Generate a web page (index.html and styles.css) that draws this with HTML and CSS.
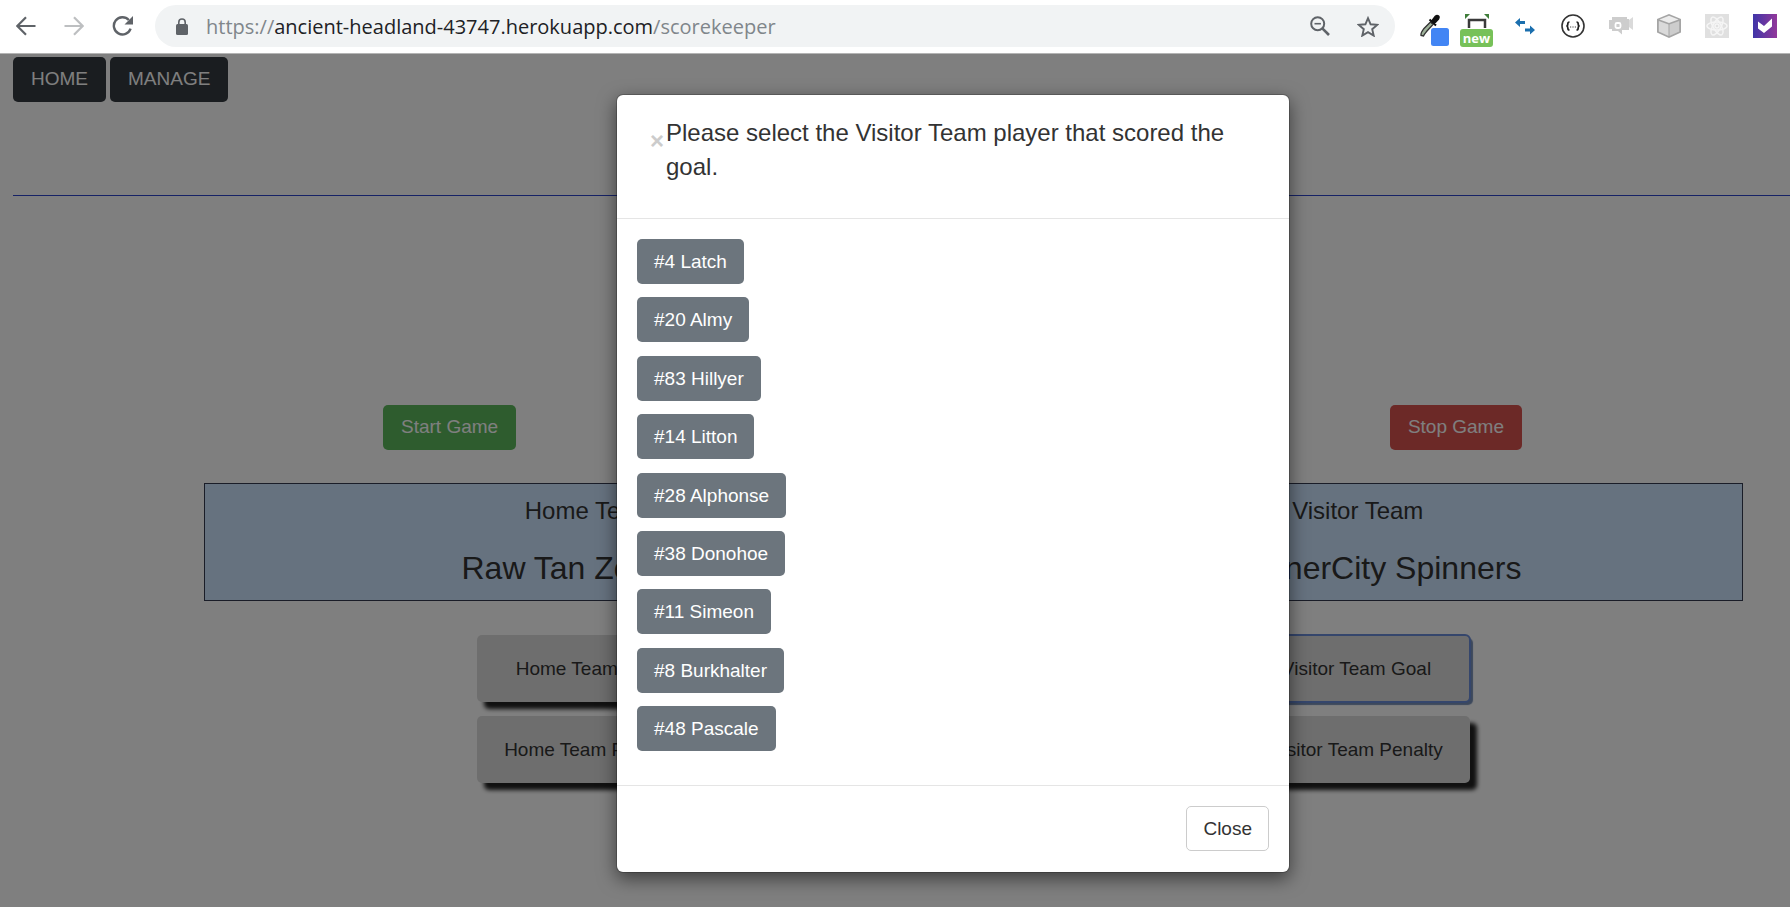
FILE: index.html
```html
<!DOCTYPE html>
<html lang="en">
<head>
<meta charset="utf-8">
<title>Scorekeeper</title>
<link rel="stylesheet" href="styles.css">
</head>
<body>
<header class="toolbar">
  <nav class="nav-buttons" aria-label="Browser navigation">
    <button class="icon-button" type="button" aria-label="Back">
      <svg width="20" height="20" viewBox="0 0 20 20" fill="none" stroke="#5f6368" stroke-width="2.2"><path d="M19.5 10H2M10 1.300L1.300 10L10 18.700"/></svg>
    </button>
    <button class="icon-button" type="button" aria-label="Forward">
      <svg width="20" height="20" viewBox="0 0 20 20" fill="none" stroke="#bdbfc1" stroke-width="2.2"><path d="M.5 10H18M10 1.300L18.700 10L10 18.700"/></svg>
    </button>
    <button class="icon-button" type="button" aria-label="Reload">
      <svg width="22" height="20" viewBox="0 0 22 20"><path d="M16.800 4A8.600 8.600 0 1 0 18.600 12.600" fill="none" stroke="#5f6368" stroke-width="2.400"/><path d="M21 0V8.500H12.500Z" fill="#5f6368"/></svg>
    </button>
  </nav>
  <div class="omnibox">
    <svg width="12" height="17" viewBox="0 0 12 17"><rect y="6" width="12" height="11" rx="1.500" fill="#5f6368"/><path d="M2.800 7V4.200a3.200 3.200 0 0 1 6.400 0V7" fill="none" stroke="#5f6368" stroke-width="1.600"/></svg>
    <p class="address">https://<span class="host">ancient-headland-43747.herokuapp.com</span>/scorekeeper</p>
    <button class="icon-button" type="button" aria-label="Zoom">
      <svg width="20" height="20" viewBox="0 0 20 20" fill="none" stroke="#5f6368"><circle cx="7.700" cy="7.700" r="6.500" stroke-width="2"/><path d="M12.300 12.300L19 19" stroke-width="2.600"/><path d="M4.500 7.700h6.400" stroke-width="1.600"/></svg>
    </button>
    <button class="icon-button" type="button" aria-label="Bookmark">
      <svg width="22" height="21" viewBox="0 0 22 21"><path d="M11 2.200L13.600 8.300L20.200 8.900L15.200 13.200L16.700 19.600L11 16.200L5.300 19.600L6.800 13.200L1.800 8.900L8.400 8.300Z" fill="none" stroke="#5f6368" stroke-width="1.900"/></svg>
    </button>
  </div>
  <div class="extensions">
    <svg class="eyedropper" width="30" height="34" viewBox="0 0 30 34"><path d="M2 22.500c-.5-3 1-4.500 3-7l6.500-6.500 2.500 2.500-6 6.500c-1.500 2-2.500 2.500-3.500 5z" fill="#9fb39b" stroke="#333" stroke-width="1.300"/><path d="M10.500 6.500l6.500 6M13 8l3.500-4.500c2-1.800 4.200 0 2.800 2.300L15.500 10z" fill="#111" stroke="#111" stroke-width="2"/><rect x="12" y="15" width="18" height="18" rx="2.500" fill="#4285f4"/></svg>
    <span class="new-extension">
      <svg width="26" height="15" viewBox="0 0 26 15"><path d="M1 0h5L1 5zM25 0h-5l5 5z" fill="#3f7d3a"/><path d="M5 14V6h16v8" fill="none" stroke="#3a3a3a" stroke-width="2.500"/></svg>
      <span class="new-badge">new</span>
    </span>
    <svg width="24" height="24" viewBox="0 0 24 24"><path d="M2 8.500l5-4.500v3h5v3H7v3z" fill="#1b6fae"/><path d="M22 16l-5-4.500v3h-5v3h5v3z" fill="#1b6fae"/></svg>
    <svg width="24" height="24" viewBox="0 0 24 24"><circle cx="12" cy="12" r="11" fill="#fff" stroke="#333" stroke-width="1.600"/><path d="M8.500 8q-1.700 0-1.700 2t-1.500 2q1.500 0 1.500 2t1.700 2M15.500 8q1.700 0 1.700 2t1.500 2q-1.500 0-1.500 2t-1.700 2" fill="none" stroke="#222" stroke-width="1.700"/><path d="M9 13h6" stroke="#444" stroke-width="1.200" stroke-dasharray="1.200 1.200"/></svg>
    <svg width="24" height="24" viewBox="0 0 24 24"><path d="M3 3h15v2h2v11h-7v4.500L9 17H3v-2H0V6h3z" fill="#cdcdcd"/><path d="M20 6l4-3v13l-4-3z" fill="#dadada"/><rect x="6.500" y="9" width="5" height="5" rx="1.500" fill="#cdcdcd" stroke="#fff" stroke-width="1.800"/></svg>
    <svg width="24" height="24" viewBox="0 0 24 24"><path d="M12 0L24 5v13.500L12 24 0 18.500V5z" fill="#a5a5a5"/><path d="M12 1.800L21.500 5.500 12 9 2.500 5.500z" fill="#ececec"/><path d="M1.800 7l9.700 3.500v11.500L1.800 17.500z" fill="#dadada"/><path d="M22.200 7L12.500 10.500v11.500l9.700-4.500z" fill="#cdcdcd"/></svg>
    <svg width="24" height="24" viewBox="0 0 24 24"><rect width="24" height="24" fill="#e0e0e0"/><g fill="none" stroke="#f5f5f5" stroke-width="1.500"><ellipse cx="12" cy="12" rx="10" ry="4"/><ellipse cx="12" cy="12" rx="10" ry="4" transform="rotate(60 12 12)"/><ellipse cx="12" cy="12" rx="10" ry="4" transform="rotate(120 12 12)"/><circle cx="12" cy="12" r="2"/></g></svg>
    <svg width="24" height="24" viewBox="0 0 24 24"><defs><linearGradient id="violet"><stop stop-color="#3f35a8"/><stop offset="1" stop-color="#92389a"/></linearGradient></defs><rect width="24" height="24" fill="url(#violet)"/><path d="M5 7.500l6 4.500 8-7.500v8L11 19l-6-4.500z" fill="#fff"/></svg>
  </div>
</header>

<div class="viewport">
  <main class="page">
    <nav class="site-nav">
      <a class="btn btn-dark" href="#home">HOME</a>
      <a class="btn btn-dark" href="#manage">MANAGE</a>
    </nav>
    <hr class="rule">
    <div class="clock-row">
      <button class="btn btn-start" type="button">Start Game</button>
      <button class="btn btn-stop" type="button">Stop Game</button>
    </div>
    <section class="scoreboard">
      <div class="team">
        <h2 class="team-side">Home Team</h2>
        <p class="team-name">Raw Tan Zombies</p>
      </div>
      <div class="team">
        <h2 class="team-side">Visitor Team</h2>
        <p class="team-name">The InnerCity Spinners</p>
      </div>
    </section>
    <section class="actions">
      <div class="action-column">
        <button class="action" type="button">Home Team Goal</button>
        <button class="action" type="button">Home Team Penalty</button>
      </div>
      <div class="action-column">
        <button class="action action-active" type="button">Visitor Team Goal</button>
        <button class="action" type="button">Visitor Team Penalty</button>
      </div>
    </section>
  </main>

  <div class="backdrop">
    <div class="modal" role="dialog" aria-labelledby="modal-title">
      <div class="modal-header">
        <button class="dismiss" type="button" aria-label="Dismiss">×</button>
        <h1 class="modal-title" id="modal-title">Please select the Visitor Team player that scored the goal.</h1>
      </div>
      <div class="modal-body">
        <button class="btn btn-player" type="button">#4 Latch</button>
        <button class="btn btn-player" type="button">#20 Almy</button>
        <button class="btn btn-player" type="button">#83 Hillyer</button>
        <button class="btn btn-player" type="button">#14 Litton</button>
        <button class="btn btn-player" type="button">#28 Alphonse</button>
        <button class="btn btn-player" type="button">#38 Donohoe</button>
        <button class="btn btn-player" type="button">#11 Simeon</button>
        <button class="btn btn-player" type="button">#8 Burkhalter</button>
        <button class="btn btn-player" type="button">#48 Pascale</button>
      </div>
      <div class="modal-footer">
        <button class="btn btn-close" type="button">Close</button>
      </div>
    </div>
  </div>
</div>
</body>
</html>
```
FILE: styles.css
```css
*,
*::before,
*::after {
  box-sizing: border-box;
}

html,
body {
  height: 100%;
}

body {
  margin: 0;
  display: flex;
  flex-direction: column;
  overflow: hidden;
  background: #fff;
  color: #333;
  font-family: "Liberation Sans", Arial, sans-serif;
  font-size: 19px;
  line-height: 29px;
}

svg {
  display: block;
  flex: none;
}

h1,
h2,
p {
  margin: 0;
  font-weight: 400;
}

button {
  font: inherit;
  cursor: pointer;
}

/* Browser toolbar */
.toolbar {
  display: flex;
  align-items: center;
  padding: 5px 13px 6px 16px;
  border-bottom: 1px solid #b4b4b4;
  background: #fff;
}

.nav-buttons {
  display: flex;
  gap: 28px;
  margin-right: 21px;
}

.icon-button {
  padding: 0;
  border: 0;
  background: none;
}

.omnibox {
  flex: 1;
  display: flex;
  align-items: center;
  gap: 27px;
  height: 42px;
  padding: 0 16px 0 21px;
  border-radius: 21px;
  background: #f1f3f4;
}

.address {
  flex: 1;
  margin-left: -9px;
  color: #80868b;
  font-family: "Open Sans", "Noto Sans", sans-serif;
  font-size: 20px;
}

.host {
  color: #202124;
}

.extensions {
  display: flex;
  align-items: center;
  gap: 24px;
  margin-left: 24px;
}

.eyedropper {
  margin-top: 8px;
}

.new-extension {
  display: flex;
  flex-direction: column;
  align-items: center;
  margin: 8px -4px 0 -13px;
}

.new-badge {
  width: 33px;
  border-radius: 3px;
  background: #77c159;
  color: #fff;
  font-family: "Open Sans", sans-serif;
  font-size: 13px;
  font-weight: 700;
  line-height: 18px;
  text-align: center;
}

/* Page */
.viewport {
  position: relative;
  flex: 1;
}

.btn {
  padding: 7px 16px;
  border: 1px solid transparent;
  border-radius: 5px;
  color: #fff;
  text-decoration: none;
}

.btn-dark,
.btn-start,
.btn-stop {
  padding: 6px 17px 8px;
}

.btn-dark {
  background: #343a40;
}

.btn-start {
  background: #5cb85c;
}

.btn-stop {
  background: #d9534f;
}

.btn-player {
  background: #6c757d;
}

.btn-close {
  border-color: #ccc;
  background: #fff;
  color: #333;
}

.page {
  padding: 3px 0 0 13px;
}

.site-nav {
  display: flex;
  gap: 4px;
}

.rule {
  margin: 93px 0 0;
  border: 0;
  border-top: 1px solid #2c44cc;
}

.clock-row {
  display: flex;
  justify-content: space-between;
  margin: 209px 268px 0 370px;
}

.scoreboard {
  display: grid;
  grid-template-columns: 1fr 1fr;
  margin: 33px 47px 0 191px;
  padding: 9px 0 8px;
  border: 1px solid #343a50;
  background: #cce5ff;
  text-align: center;
}

.team-side {
  font-size: 24px;
  line-height: 36px;
}

.team-name {
  margin-top: 15px;
  font-size: 32px;
  line-height: 48px;
}

.actions {
  display: grid;
  grid-template-columns: 1fr 1fr;
  margin: 34px 50px 0 193px;
}

.action-column {
  display: flex;
  flex-direction: column;
  align-items: center;
  gap: 14px;
}

.action {
  width: 226px;
  padding: 19px 0;
  border: 0;
  border-radius: 5px;
  background: #ddd;
  box-shadow: 7px 7px 4px #222;
  color: #333;
}

.action-active {
  box-shadow: 3px 3px 1px #7890b8;
  outline: 2px solid #6a8cd8;
  outline-offset: -1px;
}

/* Modal */
.backdrop {
  position: absolute;
  inset: 0;
  display: flex;
  justify-content: center;
  align-items: flex-start;
  padding: 40px 0 0 116px;
  background: rgba(0, 0, 0, 0.5);
}

.modal {
  width: 674px;
  border: 1px solid rgba(0, 0, 0, 0.2);
  border-radius: 7px;
  background: #fff;
  background-clip: padding-box;
  box-shadow: 0 6px 18px rgba(0, 0, 0, 0.5);
}

.modal-header {
  display: flex;
  align-items: flex-start;
  padding: 21px 32px 34px;
  border-bottom: 1px solid #e5e5e5;
}

.dismiss {
  padding: 10px 2px 0 1px;
  border: 0;
  background: none;
  color: #ccc;
  font-size: 24px;
  font-weight: 700;
  line-height: 30px;
}

.modal-title {
  font-size: 24px;
  line-height: 34px;
}

.modal-body {
  display: flex;
  flex-direction: column;
  align-items: flex-start;
  justify-content: space-between;
  min-height: 566px;
  padding: 20px 20px 34px;
}

.modal-footer {
  display: flex;
  justify-content: flex-end;
  padding: 20px 20px 21px;
  border-top: 1px solid #e5e5e5;
}
```
